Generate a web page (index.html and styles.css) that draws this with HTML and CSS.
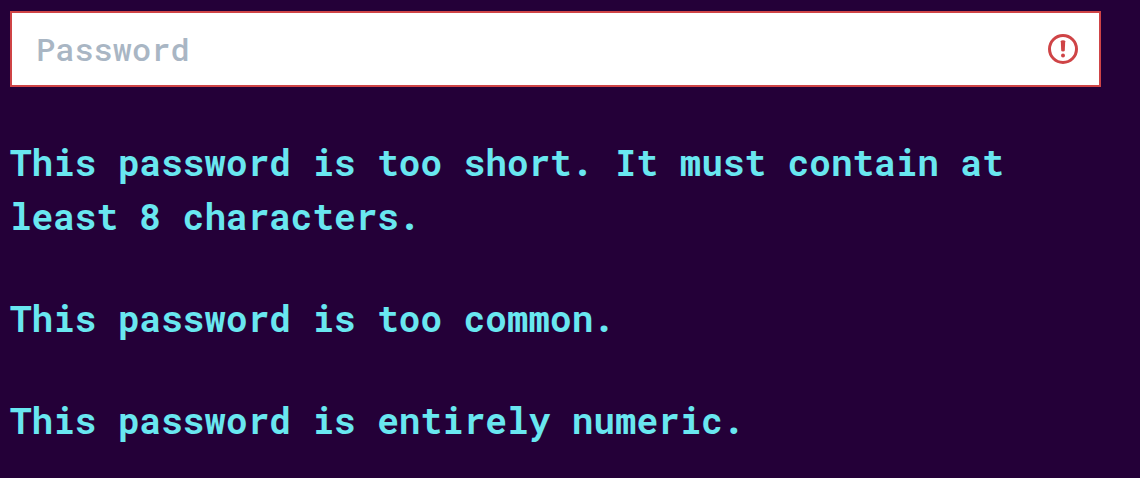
FILE: index.html
```html
<!DOCTYPE html>
<html lang="en">
<head>
<meta charset="utf-8">
<meta name="viewport" content="width=device-width, initial-scale=1">
<title>Password</title>
<link rel="stylesheet" href="styles.css">
</head>
<body>
<form class="form">
  <div class="field">
    <input class="field-input" type="password" placeholder="Password" aria-label="Password" aria-invalid="true" aria-describedby="errors">
    <svg class="field-icon" viewBox="0 0 30 30" aria-hidden="true">
      <circle cx="15" cy="15" r="13.5" fill="none" stroke="#cf4446" stroke-width="3"/>
      <path d="M12.8 7.2Q12.8 6.2 15 6.2T17.2 7.2L16.8 16.5Q16.7 17.6 15 17.6T13.2 16.5Z" fill="#cf4446"/>
      <circle cx="15" cy="21.6" r="2" fill="#cf4446"/>
    </svg>
  </div>
  <div class="errors" id="errors">
    <p class="error">This password is too short. It must contain at least 8 characters.</p>
    <p class="error">This password is too common.</p>
    <p class="error">This password is entirely numeric.</p>
  </div>
</form>
</body>
</html>
```

FILE: styles.css
```css
body {
  margin: 0;
  background: #240038;
  font-family: "Roboto Mono", "DejaVu Sans Mono", monospace;
}

.form {
  padding: 11px 39px 0 10px;
}

.field {
  display: flex;
  align-items: center;
  border: 2px solid #cf4446;
  background: #fff;
  padding-right: 21px;
}

.field-input {
  flex: 1;
  min-width: 0;
  height: 72px;
  box-sizing: border-box;
  padding: 0 24px 2px;
  border: 0;
  outline: 0;
  background: transparent;
  color: #240038;
  font: inherit;
  font-size: 32px;
}

.field-input::placeholder {
  color: #a9b6c4;
  font-weight: 500;
  opacity: 1;
}

.field-icon {
  flex: none;
  width: 30px;
  height: 30px;
}

.errors {
  display: flex;
  flex-direction: column;
  gap: 48px;
  margin-top: 48px;
}

.error {
  margin: 0;
  color: #69e7f0;
  font-size: 36px;
  font-weight: 700;
  line-height: 54px;
}
```
